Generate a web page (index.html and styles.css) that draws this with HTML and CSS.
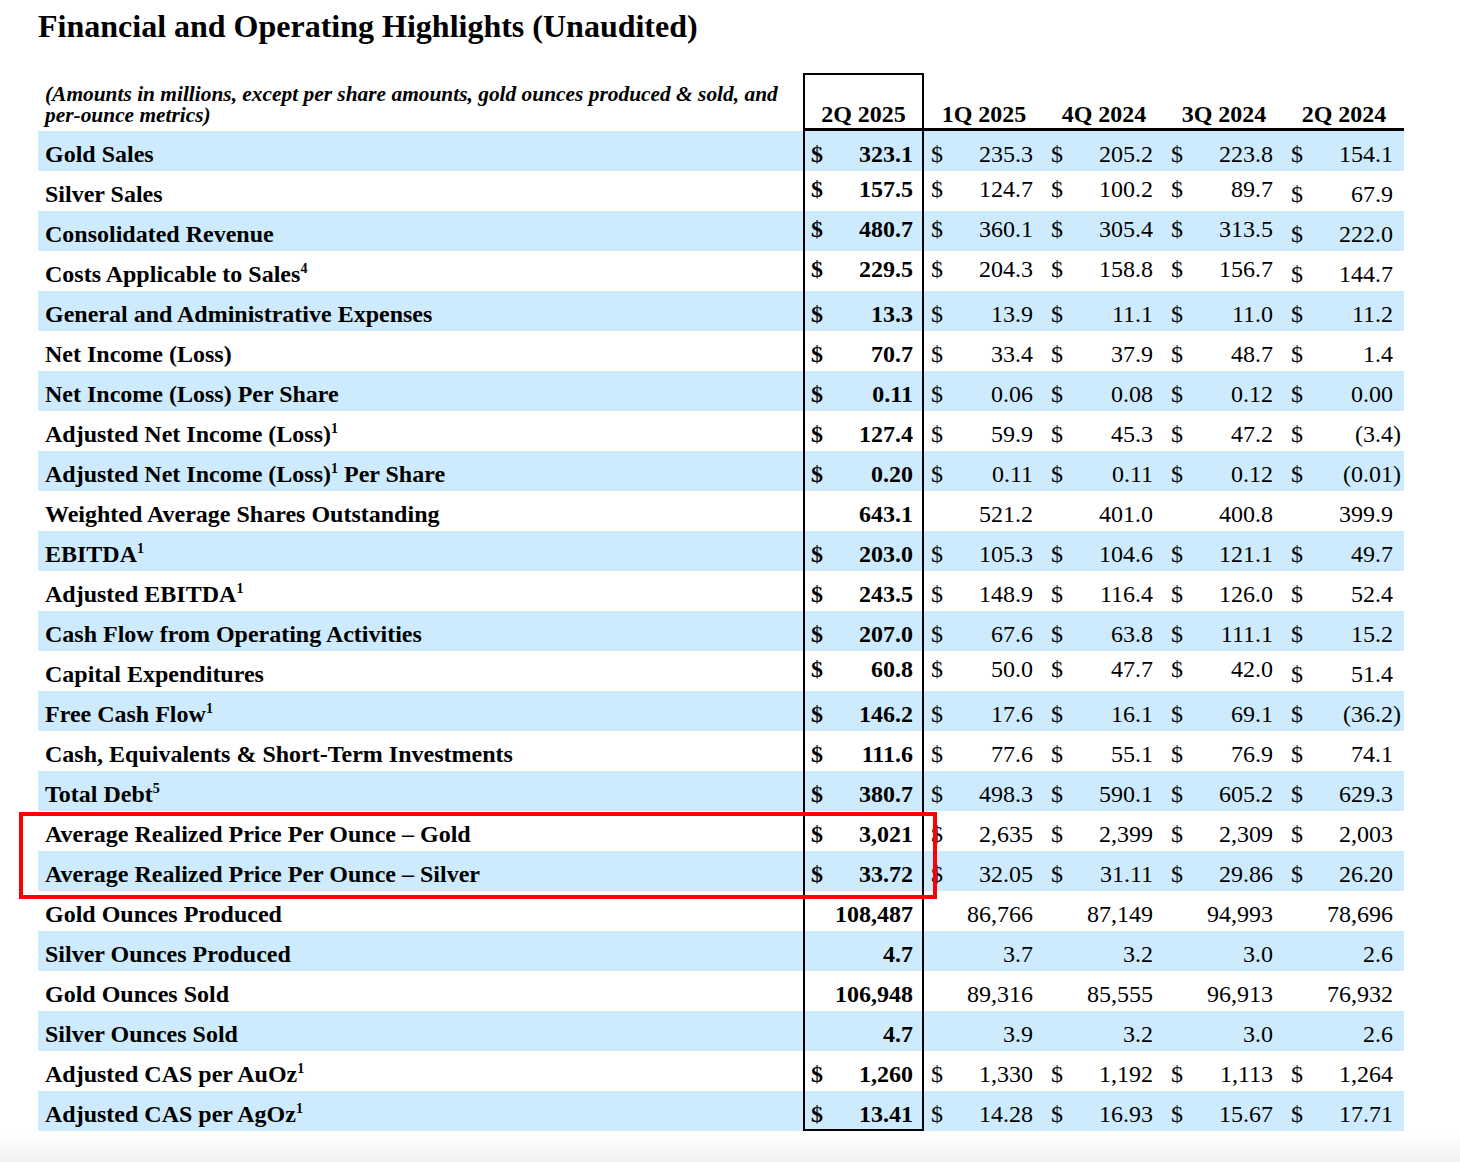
FILE: index.html
```html
<!DOCTYPE html>
<html>
<head>
<meta charset="utf-8">
<link rel="stylesheet" href="styles.css">
</head>
<body>
<h1>Financial and Operating Highlights (Unaudited)</h1>
<table class="tbl">
<colgroup><col class="cl"><col class="cb"><col class="cn"><col class="cn"><col class="cn"><col class="cn"></colgroup>
<tr class="head">
<td class="note"><div class="nl">(Amounts in millions, except per share amounts, gold ounces produced &amp; sold, and</div><div class="nl">per-ounce metrics)</div></td>
<td class="h hb">2Q 2025</td><td class="h">1Q 2025</td><td class="h">4Q 2024</td><td class="h">3Q 2024</td><td class="h">2Q 2024</td>
</tr>
<tr class="bl"><td class="l">Gold Sales</td><td class="b"><div class="c"><span>$</span><span>323.1</span></div></td><td class="n"><div class="c"><span>$</span><span>235.3</span></div></td><td class="n"><div class="c"><span>$</span><span>205.2</span></div></td><td class="n"><div class="c"><span>$</span><span>223.8</span></div></td><td class="n"><div class="c"><span>$</span><span>154.1</span></div></td></tr>
<tr><td class="l">Silver Sales</td><td class="b u"><div class="c"><span>$</span><span>157.5</span></div></td><td class="n u"><div class="c"><span>$</span><span>124.7</span></div></td><td class="n u"><div class="c"><span>$</span><span>100.2</span></div></td><td class="n u"><div class="c"><span>$</span><span>89.7</span></div></td><td class="n"><div class="c"><span>$</span><span>67.9</span></div></td></tr>
<tr class="bl"><td class="l">Consolidated Revenue</td><td class="b u"><div class="c"><span>$</span><span>480.7</span></div></td><td class="n u"><div class="c"><span>$</span><span>360.1</span></div></td><td class="n u"><div class="c"><span>$</span><span>305.4</span></div></td><td class="n u"><div class="c"><span>$</span><span>313.5</span></div></td><td class="n"><div class="c"><span>$</span><span>222.0</span></div></td></tr>
<tr><td class="l">Costs Applicable to Sales<span class="s">4</span></td><td class="b u"><div class="c"><span>$</span><span>229.5</span></div></td><td class="n u"><div class="c"><span>$</span><span>204.3</span></div></td><td class="n u"><div class="c"><span>$</span><span>158.8</span></div></td><td class="n u"><div class="c"><span>$</span><span>156.7</span></div></td><td class="n"><div class="c"><span>$</span><span>144.7</span></div></td></tr>
<tr class="bl"><td class="l">General and Administrative Expenses</td><td class="b"><div class="c"><span>$</span><span>13.3</span></div></td><td class="n"><div class="c"><span>$</span><span>13.9</span></div></td><td class="n"><div class="c"><span>$</span><span>11.1</span></div></td><td class="n"><div class="c"><span>$</span><span>11.0</span></div></td><td class="n"><div class="c"><span>$</span><span>11.2</span></div></td></tr>
<tr><td class="l">Net Income (Loss)</td><td class="b"><div class="c"><span>$</span><span>70.7</span></div></td><td class="n"><div class="c"><span>$</span><span>33.4</span></div></td><td class="n"><div class="c"><span>$</span><span>37.9</span></div></td><td class="n"><div class="c"><span>$</span><span>48.7</span></div></td><td class="n"><div class="c"><span>$</span><span>1.4</span></div></td></tr>
<tr class="bl"><td class="l">Net Income (Loss) Per Share</td><td class="b"><div class="c"><span>$</span><span>0.11</span></div></td><td class="n"><div class="c"><span>$</span><span>0.06</span></div></td><td class="n"><div class="c"><span>$</span><span>0.08</span></div></td><td class="n"><div class="c"><span>$</span><span>0.12</span></div></td><td class="n"><div class="c"><span>$</span><span>0.00</span></div></td></tr>
<tr><td class="l">Adjusted Net Income (Loss)<span class="s">1</span></td><td class="b"><div class="c"><span>$</span><span>127.4</span></div></td><td class="n"><div class="c"><span>$</span><span>59.9</span></div></td><td class="n"><div class="c"><span>$</span><span>45.3</span></div></td><td class="n"><div class="c"><span>$</span><span>47.2</span></div></td><td class="n"><div class="c"><span>$</span><span>(3.4<span class="p">)</span></span></div></td></tr>
<tr class="bl"><td class="l">Adjusted Net Income (Loss)<span class="s">1</span> Per Share</td><td class="b"><div class="c"><span>$</span><span>0.20</span></div></td><td class="n"><div class="c"><span>$</span><span>0.11</span></div></td><td class="n"><div class="c"><span>$</span><span>0.11</span></div></td><td class="n"><div class="c"><span>$</span><span>0.12</span></div></td><td class="n"><div class="c"><span>$</span><span>(0.01<span class="p">)</span></span></div></td></tr>
<tr><td class="l">Weighted Average Shares Outstanding</td><td class="b"><div class="c e"><span>643.1</span></div></td><td class="n"><div class="c e"><span>521.2</span></div></td><td class="n"><div class="c e"><span>401.0</span></div></td><td class="n"><div class="c e"><span>400.8</span></div></td><td class="n"><div class="c e"><span>399.9</span></div></td></tr>
<tr class="bl"><td class="l">EBITDA<span class="s">1</span></td><td class="b"><div class="c"><span>$</span><span>203.0</span></div></td><td class="n"><div class="c"><span>$</span><span>105.3</span></div></td><td class="n"><div class="c"><span>$</span><span>104.6</span></div></td><td class="n"><div class="c"><span>$</span><span>121.1</span></div></td><td class="n"><div class="c"><span>$</span><span>49.7</span></div></td></tr>
<tr><td class="l">Adjusted EBITDA<span class="s">1</span></td><td class="b"><div class="c"><span>$</span><span>243.5</span></div></td><td class="n"><div class="c"><span>$</span><span>148.9</span></div></td><td class="n"><div class="c"><span>$</span><span>116.4</span></div></td><td class="n"><div class="c"><span>$</span><span>126.0</span></div></td><td class="n"><div class="c"><span>$</span><span>52.4</span></div></td></tr>
<tr class="bl"><td class="l">Cash Flow from Operating Activities</td><td class="b"><div class="c"><span>$</span><span>207.0</span></div></td><td class="n"><div class="c"><span>$</span><span>67.6</span></div></td><td class="n"><div class="c"><span>$</span><span>63.8</span></div></td><td class="n"><div class="c"><span>$</span><span>111.1</span></div></td><td class="n"><div class="c"><span>$</span><span>15.2</span></div></td></tr>
<tr><td class="l">Capital Expenditures</td><td class="b u"><div class="c"><span>$</span><span>60.8</span></div></td><td class="n u"><div class="c"><span>$</span><span>50.0</span></div></td><td class="n u"><div class="c"><span>$</span><span>47.7</span></div></td><td class="n u"><div class="c"><span>$</span><span>42.0</span></div></td><td class="n"><div class="c"><span>$</span><span>51.4</span></div></td></tr>
<tr class="bl"><td class="l">Free Cash Flow<span class="s">1</span></td><td class="b"><div class="c"><span>$</span><span>146.2</span></div></td><td class="n"><div class="c"><span>$</span><span>17.6</span></div></td><td class="n"><div class="c"><span>$</span><span>16.1</span></div></td><td class="n"><div class="c"><span>$</span><span>69.1</span></div></td><td class="n"><div class="c"><span>$</span><span>(36.2<span class="p">)</span></span></div></td></tr>
<tr><td class="l">Cash, Equivalents &amp; Short-Term Investments</td><td class="b"><div class="c"><span>$</span><span>111.6</span></div></td><td class="n"><div class="c"><span>$</span><span>77.6</span></div></td><td class="n"><div class="c"><span>$</span><span>55.1</span></div></td><td class="n"><div class="c"><span>$</span><span>76.9</span></div></td><td class="n"><div class="c"><span>$</span><span>74.1</span></div></td></tr>
<tr class="bl"><td class="l">Total Debt<span class="s">5</span></td><td class="b"><div class="c"><span>$</span><span>380.7</span></div></td><td class="n"><div class="c"><span>$</span><span>498.3</span></div></td><td class="n"><div class="c"><span>$</span><span>590.1</span></div></td><td class="n"><div class="c"><span>$</span><span>605.2</span></div></td><td class="n"><div class="c"><span>$</span><span>629.3</span></div></td></tr>
<tr><td class="l">Average Realized Price Per Ounce – Gold</td><td class="b"><div class="c"><span>$</span><span>3,021</span></div></td><td class="n"><div class="c"><span>$</span><span>2,635</span></div></td><td class="n"><div class="c"><span>$</span><span>2,399</span></div></td><td class="n"><div class="c"><span>$</span><span>2,309</span></div></td><td class="n"><div class="c"><span>$</span><span>2,003</span></div></td></tr>
<tr class="bl"><td class="l">Average Realized Price Per Ounce – Silver</td><td class="b"><div class="c"><span>$</span><span>33.72</span></div></td><td class="n"><div class="c"><span>$</span><span>32.05</span></div></td><td class="n"><div class="c"><span>$</span><span>31.11</span></div></td><td class="n"><div class="c"><span>$</span><span>29.86</span></div></td><td class="n"><div class="c"><span>$</span><span>26.20</span></div></td></tr>
<tr><td class="l">Gold Ounces Produced</td><td class="b"><div class="c e"><span>108,487</span></div></td><td class="n"><div class="c e"><span>86,766</span></div></td><td class="n"><div class="c e"><span>87,149</span></div></td><td class="n"><div class="c e"><span>94,993</span></div></td><td class="n"><div class="c e"><span>78,696</span></div></td></tr>
<tr class="bl"><td class="l">Silver Ounces Produced</td><td class="b"><div class="c e"><span>4.7</span></div></td><td class="n"><div class="c e"><span>3.7</span></div></td><td class="n"><div class="c e"><span>3.2</span></div></td><td class="n"><div class="c e"><span>3.0</span></div></td><td class="n"><div class="c e"><span>2.6</span></div></td></tr>
<tr><td class="l">Gold Ounces Sold</td><td class="b"><div class="c e"><span>106,948</span></div></td><td class="n"><div class="c e"><span>89,316</span></div></td><td class="n"><div class="c e"><span>85,555</span></div></td><td class="n"><div class="c e"><span>96,913</span></div></td><td class="n"><div class="c e"><span>76,932</span></div></td></tr>
<tr class="bl"><td class="l">Silver Ounces Sold</td><td class="b"><div class="c e"><span>4.7</span></div></td><td class="n"><div class="c e"><span>3.9</span></div></td><td class="n"><div class="c e"><span>3.2</span></div></td><td class="n"><div class="c e"><span>3.0</span></div></td><td class="n"><div class="c e"><span>2.6</span></div></td></tr>
<tr><td class="l">Adjusted CAS per AuOz<span class="s">1</span></td><td class="b"><div class="c"><span>$</span><span>1,260</span></div></td><td class="n"><div class="c"><span>$</span><span>1,330</span></div></td><td class="n"><div class="c"><span>$</span><span>1,192</span></div></td><td class="n"><div class="c"><span>$</span><span>1,113</span></div></td><td class="n"><div class="c"><span>$</span><span>1,264</span></div></td></tr>
<tr class="bl last"><td class="l">Adjusted CAS per AgOz<span class="s">1</span></td><td class="b"><div class="c"><span>$</span><span>13.41</span></div></td><td class="n"><div class="c"><span>$</span><span>14.28</span></div></td><td class="n"><div class="c"><span>$</span><span>16.93</span></div></td><td class="n"><div class="c"><span>$</span><span>15.67</span></div></td><td class="n"><div class="c"><span>$</span><span>17.71</span></div></td></tr>
</table>
<div class="redbox"></div>
</body>
</html>
```
FILE: styles.css
```css
html {
  height: 100%;
  background: linear-gradient(to bottom, #ffffff 0, #ffffff 1134px, #f1f1f1 1162px);
}
body {
  margin: 0;
  padding: 8px 0 0 38px;
  font-family: "Liberation Serif", "Times New Roman", serif;
  color: #000;
  position: relative;
}
h1 {
  margin: 0;
  font-size: 32px;
  line-height: 36px;
  font-weight: bold;
}
.tbl {
  margin-top: 29px;
  border-collapse: separate;
  border-spacing: 0;
  table-layout: fixed;
  width: 1366px;
  font-size: 24px;
}
.cl { width: 765px; }
.cb { width: 121px; }
.cn { width: 120px; }
.tbl td { padding: 0; }
.note {
  vertical-align: top;
  padding: 9px 0 0 7px !important;
  font-size: 21.4px;
  font-style: italic;
  font-weight: bold;
  white-space: nowrap;
}
.nl {
  height: 21px;
  line-height: 24px;
}
.h {
  vertical-align: bottom;
  text-align: center;
  font-weight: bold;
  line-height: 28px;
  border-bottom: 3px solid #000;
}
.hb {
  border-top: 2px solid #000;
  border-left: 2px solid #000;
  border-right: 2px solid #000;
}
.tbl tr { height: 40px; }
.tbl tr.head { height: 58px; }
.bl { background: #cdebfc; }
.l {
  vertical-align: top;
  padding: 8px 0 0 7px !important;
  line-height: 30px;
  font-weight: bold;
  white-space: nowrap;
}
.n {
  vertical-align: top;
  padding: 8px 11px 0 7px !important;
  line-height: 30px;
}
.b {
  vertical-align: top;
  padding: 8px 9px 0 6px !important;
  line-height: 30px;
  font-weight: bold;
  border-left: 2px solid #000;
  border-right: 2px solid #000;
}
.last .b { border-bottom: 2px solid #000; }
.tbl td.u { padding-top: 3px !important; }
.c {
  display: flex;
  justify-content: space-between;
  white-space: nowrap;
}
.c.e { justify-content: flex-end; }
.p { margin-right: -8px; }
.s {
  font-size: 14px;
  line-height: 0;
  vertical-align: 9px;
}
.redbox {
  position: absolute;
  left: 19px;
  top: 812px;
  width: 918px;
  height: 87px;
  border: 4px solid #ff0000;
  box-sizing: border-box;
}
```
